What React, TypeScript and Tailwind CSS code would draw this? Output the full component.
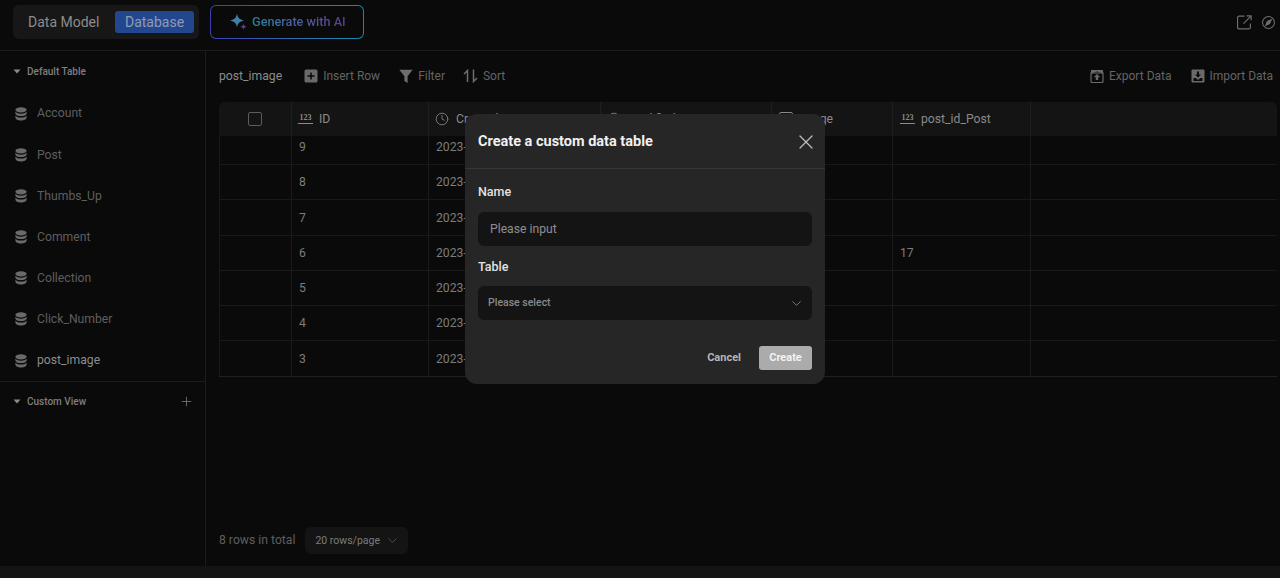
import React from 'react';
import { ChevronDown, Clock, Plus, X } from 'lucide-react';

const TABLES = ['Account', 'Post', 'Thumbs_Up', 'Comment', 'Collection', 'Click_Number', 'post_image'];

const ROWS = [
    { id: '9', h: 'h-[29px]', post: '' },
    { id: '8', h: 'h-[35px]', post: '' },
    { id: '7', h: 'h-[36px]', post: '' },
    { id: '6', h: 'h-[35px]', post: '17' },
    { id: '5', h: 'h-[35px]', post: '' },
    { id: '4', h: 'h-[35px]', post: '' },
    { id: '3', h: 'h-[35px]', post: '' },
];

const COLS = 'grid grid-cols-[72px_137px_172px_171px_121px_138px_1fr]';

const Caret = () => (
    <svg width="8" height="5" viewBox="0 0 8 5" className="shrink-0">
        <path d="M0.5 0.5h7L4 4.5z" fill="#8a8a8a" />
    </svg>
);

const DbIcon = () => (
    <svg width="12" height="14" viewBox="0 0 12 14" className="ml-px shrink-0" fill="#6a6a6a">
        <ellipse cx="6" cy="2.8" rx="5.6" ry="2.6" />
        <path d="M0.4 4.6C1.4 6.2 3.600 6.800 6 6.800s4.600-.6 5.600-2.200V6.400C11.600 8 9 9 6 9S.4 8 .4 6.400z" />
        <path d="M0.4 8.400C1.400 10 3.600 10.600 6 10.600s4.600-.6 5.600-2.200v1.800C11.600 12.300 9 13.400 6 13.400S.4 12.300.4 10.200z" />
    </svg>
);

const NumberIcon = () => (
    <span className="flex w-[15px] flex-col items-center border-b border-[#8a8a8a] pb-[1px] font-['Liberation_Serif',serif] text-[8px] leading-[8px] font-bold text-[#8a8a8a]">
        123
    </span>
);

const BoxIcon = ({ kind }: { kind: 'plus' | 'up' | 'down' }) => (
    <svg width="14" height="14" viewBox="0 0 14 14" className="shrink-0">
        {kind === 'plus' && (
            <>
                <rect x="0.5" y="0.5" width="13" height="13" rx="1.5" fill="#6a6a6a" />
                <path d="M7 3.5v7M3.5 7h7" stroke="#0a0a0a" strokeWidth="1.5" />
            </>
        )}
        {kind === 'up' && (
            <>
                <path d="M1 4h12v8.500a1 1 0 0 1-1 1H2a1 1 0 0 1-1-1z" fill="none" stroke="#6a6a6a" strokeWidth="1.2" />
                <path d="M1 1h12v3.500l-6-2-6 2z" fill="#6a6a6a" />
                <path d="M7 5l3.200 3.200H8.200v2.800H5.800V8.200H3.800z" fill="#6a6a6a" />
            </>
        )}
        {kind === 'down' && (
            <>
                <path d="M0.5 1.500a1 1 0 0 1 1-1h11a1 1 0 0 1 1 1v11a1 1 0 0 1-1 1h-11a1 1 0 0 1-1-1z" fill="#6a6a6a" />
                <path d="M2.500 9h2.500l1 1.500h2L9 9h2.500v3h-9z" fill="#0a0a0a" />
                <path d="M6 2.500h2v3h2L7 8.500 4 5.500h2z" fill="#0a0a0a" />
            </>
        )}
    </svg>
);

const FilterIcon = () => (
    <svg width="14" height="15" viewBox="0 0 14 15" className="shrink-0">
        <path d="M0.300 0.800h13.400L8.600 7.200V14L5.400 12V7.200z" fill="#6e6e6e" />
    </svg>
);

const SortIcon = () => (
    <svg width="16" height="14" viewBox="0 0 16 14" className="shrink-0" fill="none" stroke="#6e6e6e" strokeWidth="1.5">
        <path d="M4.500 13V1.500L1 5" />
        <path d="M10.500 0.500V12.500L14 9" />
    </svg>
);

const App: React.FC = () => {
    return (
        <div className="relative flex h-[578px] w-[1280px] flex-col overflow-hidden bg-[#0a0a0a] font-['Roboto',sans-serif]">

            {/* top bar */}
            <div className="flex h-[51px] shrink-0 items-center border-b border-[#1c1c1c] pb-[6px] pl-[13px] pr-[5px]">
                <div className="flex h-[34px] w-[186px] items-center rounded-md bg-[#171717] pl-[15px] pr-[5px]">
                    <span className="text-sm text-[#8c8c8c]">Data Model</span>
                    <span className="ml-auto flex h-[22px] w-[79px] items-center justify-center rounded-[3px] bg-[#23478f] text-sm text-[#8f9bb2]">Database</span>
                </div>
                <div className="ml-[11px] h-[34px] w-[154px] rounded-md bg-gradient-to-r from-[#3d3fb0] to-[#0e8bb0] p-px">
                    <div className="flex h-full items-center gap-[4px] rounded-[5px] bg-[#0a0a0a] pl-[19px]">
                        <svg width="18" height="18" viewBox="0 0 18 18" className="shrink-0">
                            <path d="M7 0.500c.7 4.300 2.400 6 7 7-4.600 1-6.300 2.700-7 7-.7-4.300-2.400-6-6.800-7C4.600 6.500 6.300 4.800 7 .5z" fill="#3f7fa8" />
                            <path d="M13.500 10.500c.3 2 1 2.700 3.300 3.200-2.300.5-3 1.200-3.300 3.300-.3-2.100-1-2.800-3.300-3.300 2.300-.5 3-1.200 3.300-3.200z" fill="#5a4196" />
                        </svg>
                        <span className="bg-gradient-to-r from-[#217f9e] to-[#5b3a96] bg-clip-text text-[12.7px] font-medium text-transparent">Generate with AI</span>
                    </div>
                </div>
                <div className="ml-auto flex items-center gap-[10px]">
                    <svg width="15" height="15" viewBox="0 0 14 14" fill="none" stroke="#6e6e6e" strokeWidth="1.1">
                        <path d="M7 1H2a1.500 1.500 0 0 0-1.500 1.500v9A1.500 1.500 0 0 0 2 13h9a1.500 1.500 0 0 0 1.500-1.500V8" />
                        <path d="M6 8l7-7M9 .8h4.200V5" />
                    </svg>
                    <svg width="13" height="13" viewBox="0 0 12 12" fill="none" stroke="#6e6e6e" strokeWidth="1">
                        <circle cx="6" cy="6" r="5.500" />
                        <path d="M8.500 3.500L5 5l-1.500 3.500L7 7z" fill="#6e6e6e" />
                    </svg>
                </div>
            </div>

            <div className="flex min-h-0 flex-1">
                {/* sidebar */}
                <aside className="flex w-[206px] shrink-0 flex-col border-r border-[#1c1c1c]">
                    <div className="flex h-[41px] shrink-0 items-center gap-[6px] pl-[13px] text-[10px] font-medium text-[#7f7f7f]">
                        <Caret />
                        Default Table
                    </div>
                    <div className="flex flex-col pt-px">
                        {TABLES.map((name) => (
                            <div key={name} className="flex h-[41.170px] items-center gap-[10px] pl-[14px]">
                                <DbIcon />
                                <span className={name === 'post_image' ? 'text-[12.2px] text-[#8c8c8c]' : 'text-[12.2px] text-[#5e5e5e]'}>{name}</span>
                            </div>
                        ))}
                    </div>
                    <div className="flex h-[40px] shrink-0 items-center gap-[6px] border-t border-[#1c1c1c] pl-[13px] pr-[11px] text-[10px] font-medium text-[#7f7f7f]">
                        <Caret />
                        Custom View
                        <Plus size={15} strokeWidth={1.1} className="ml-auto text-[#8a8a8a]" />
                    </div>
                </aside>

                {/* main */}
                <main className="flex min-w-0 flex-1 flex-col pl-[13px] pr-[3px]">
                    <div className="flex h-[51px] shrink-0 items-center pb-px pr-[4px] text-[12px] text-[#646464]">
                        <span className="mr-[22px] text-[12.2px] text-[#8c8c8c]">post_image</span>
                        <div className="mr-[19px] flex items-center gap-[5px]"><BoxIcon kind="plus" /><span>Insert Row</span></div>
                        <div className="mr-[18px] flex items-center gap-[5px]"><FilterIcon /><span>Filter</span></div>
                        <div className="flex items-center gap-[4px]"><SortIcon /><span>Sort</span></div>
                        <div className="ml-auto flex items-center gap-[19px]">
                            <div className="flex items-center gap-[5px]"><BoxIcon kind="up" /><span>Export Data</span></div>
                            <div className="flex items-center gap-[5px]"><BoxIcon kind="down" /><span>Import Data</span></div>
                        </div>
                    </div>

                    {/* table */}
                    <div className="shrink-0 overflow-hidden rounded-t-md border-b border-[#202020] text-[12.2px]">
                        <div className={`${COLS} h-[34px] bg-[#141414] text-[#8a8a8a]`}>
                            <div className="flex items-center justify-center">
                                <span className="h-[14px] w-[14px] rounded-[2px] border border-[#5c5c5c]" />
                            </div>
                            <div className="flex items-center gap-[6px] border-l border-[#1f1f1f] pl-[6px]"><NumberIcon />ID</div>
                            <div className="flex items-center gap-[7px] border-l border-[#1f1f1f] pl-[6px]"><Clock size={14} strokeWidth={1.4} />Created at</div>
                            <div className="flex items-center gap-[7px] border-l border-[#1f1f1f] pl-[6px]"><Clock size={14} strokeWidth={1.4} />Modified at</div>
                            <div className="flex items-center gap-[6px] border-l border-[#1f1f1f] pl-[7px]"><span className="h-[14px] w-[14px] rounded-[2px] border border-[#8a8a8a]" />Image</div>
                            <div className="flex items-center gap-[6px] border-l border-[#1f1f1f] pl-[7px]"><NumberIcon />post_id_Post</div>
                            <div className="border-l border-[#1f1f1f]" />
                        </div>
                        {ROWS.map((row, i) => (
                            <div key={row.id} className={`${COLS} ${row.h} text-[#7c7c7c] ${i === ROWS.length - 1 ? '' : 'border-b'} border-b-[#191919]`}>
                                <div className="border-l border-[#181818]" />
                                <div className={`flex border-l border-[#1a1a1a] pl-[7px] ${i === 0 ? 'items-start pt-[2px]' : 'items-center pt-px'}`}>{row.id}</div>
                                <div className={`flex border-l border-[#1a1a1a] pl-[7px] ${i === 0 ? 'items-start pt-[2px]' : 'items-center pt-px'}`}>2023-10-1{row.id} 10:20:00</div>
                                <div className="border-l border-[#1a1a1a]" />
                                <div className="border-l border-[#1a1a1a]" />
                                <div className="flex items-center border-l border-[#1a1a1a] pl-[7px] pt-px">{row.post}</div>
                                <div className="border-l border-[#1a1a1a]" />
                            </div>
                        ))}
                    </div>

                    {/* pagination */}
                    <div className="mt-auto mb-[12px] flex items-center gap-[10px]">
                        <span className="text-[12.2px] text-[#5e5e5e]">8 rows in total</span>
                        <div className="flex h-[27px] w-[103px] items-center justify-between rounded-md bg-[#141414] pl-[10px] pr-[8px] text-[10.5px] text-[#7c7c7c]">
                            20 rows/page
                            <ChevronDown size={15} strokeWidth={1} className="text-[#6a6a6a]" />
                        </div>
                    </div>
                </main>
            </div>

            <div className="h-[12px] shrink-0 bg-[#141414]" />

            {/* modal */}
            <div className="absolute left-[465px] top-[114px] flex h-[270px] w-[360px] flex-col rounded-xl bg-[#262626]">
                <div className="flex h-[55px] shrink-0 items-center justify-between border-b border-[#363636] pl-[13px] pr-[7px] pt-px">
                    <span className="text-[14.5px] font-bold text-[#f0f0f0]">Create a custom data table</span>
                    <X size={24} strokeWidth={1.2} className="text-[#bdbdbd]" />
                </div>
                <div className="flex flex-1 flex-col px-[13px]">
                    <label className="mt-[14px] text-[12.5px] font-medium leading-[18px] text-[#e2e2e2]">Name</label>
                    <div className="mt-[11px] flex h-[34px] items-center rounded-md bg-[#141414] pl-[12px] text-[12.2px] text-[#8f8f8f]">
                        Please input
                    </div>
                    <label className="mt-[12px] text-[12.5px] font-medium leading-[18px] text-[#e2e2e2]">Table</label>
                    <div className="mt-[10px] flex h-[34px] items-center justify-between rounded-md bg-[#141414] pl-[10px] pr-[8px] text-[10.5px] font-medium text-[#8a8a8a]">
                        Please select
                        <ChevronDown size={15} strokeWidth={1.2} className="text-[#9a9a9a]" />
                    </div>
                    <div className="mt-[26px] flex items-center justify-end gap-[18px] text-[11px] font-bold">
                        <span className="text-[#b5b5b5]">Cancel</span>
                        <span className="flex h-[24px] w-[53px] items-center justify-center rounded-[3px] bg-[#ababab] text-[#f2f2f2]">Create</span>
                    </div>
                </div>
            </div>
        </div>
    );
};

export default App;
